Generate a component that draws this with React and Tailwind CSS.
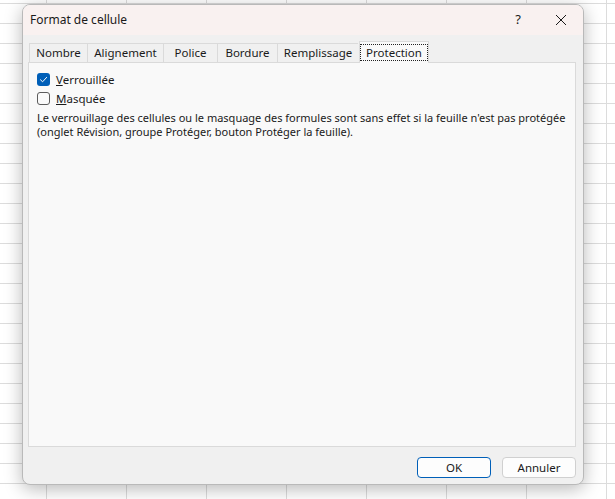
import React from 'react';

// Tabs of the "Format de cellule" dialog, Protection is the active one
const tabs = [
  { name: 'Nombre', w: 'w-[58px]' },
  { name: 'Alignement', w: 'w-[76px]' },
  { name: 'Police', w: 'w-[54px]' },
  { name: 'Bordure', w: 'w-[60px]' },
  { name: 'Remplissage', w: 'w-[81px]' },
];

function Checkbox({ checked }) {
  return checked ? (
    <span className="w-[13px] h-[13px] rounded-[3px] bg-[#005fb8] flex items-center justify-center">
      <svg width="9" height="9" viewBox="0 0 9 9" fill="none">
        <path d="M1.5 4.8 L3.6 6.8 L7.6 2.4" stroke="white" strokeWidth="1" strokeLinecap="round" strokeLinejoin="round" />
      </svg>
    </span>
  ) : (
    <span className="w-[13px] h-[13px] rounded-[3px] border border-[#5c5c5c] bg-[#fafafa]" />
  );
}

export default function App() {
  return (
    <div
      className="w-full h-[499px] overflow-hidden bg-white pt-[4px] pl-[22px] bg-[linear-gradient(to_right,#dcdcdc_1px,transparent_1px),linear-gradient(to_bottom,#dcdcdc_1px,transparent_1px)] bg-[size:80px_20px] bg-[position:46px_3px]"
      style={{ fontFamily: '"Noto Sans", "Segoe UI", sans-serif' }}
    >
      <div className="w-[562px] h-[481px] rounded-[8px] border border-[#b9b9b9] bg-[#f0f0f0] shadow-[0_4px_18px_rgba(0,0,0,0.28)] flex flex-col overflow-hidden text-[#1a1a1a]">
        {/* title bar */}
        <div className="h-[30px] bg-[#f9f1f0] flex items-center pl-[7px] shrink-0">
          <span className="text-[12px] flex-1">Format de cellule</span>
          <span className="text-[13px] w-[20px] text-center mr-[27px]">?</span>
          <svg width="12" height="12" viewBox="0 0 12 12" className="mr-[16px]">
            <path d="M1 1 L11 11 M11 1 L1 11" stroke="#1a1a1a" strokeWidth="1" />
          </svg>
        </div>

        {/* tabs */}
        <div className="flex items-end pl-[6px] h-[27px] text-[11.5px] shrink-0">
          {tabs.map((t) => (
            <div
              key={t.name}
              className={`${t.w} h-[19px] flex items-center justify-center border-t border-l border-[#dadada] bg-[#f0f0f0]`}
            >
              {t.name}
            </div>
          ))}
          <div className="w-[70px] h-[22px] flex items-center justify-center border-t border-l border-r border-[#dadada] bg-[#f9f9f9] -mb-px relative z-10 ml-[1px]">
            <span className="border border-dotted border-[#222] px-[5px] leading-[15px]">Protection</span>
          </div>
        </div>

        {/* panel */}
        <div className="ml-[5px] mr-[7px] h-[385px] border border-[#dadada] bg-[#f9f9f9] px-[8px] pt-[10px] text-[11.5px] shrink-0">
          <div className="flex items-center gap-[6px] h-[13px]">
            <Checkbox checked />
            <span><span className="underline">V</span>errouillée</span>
          </div>
          <div className="flex items-center gap-[6px] h-[13px] mt-[6px]">
            <Checkbox />
            <span><span className="underline">M</span>asquée</span>
          </div>
          <p className="mt-[6px] leading-[14px] text-[11px] whitespace-nowrap">
            Le verrouillage des cellules ou le masquage des formules sont sans effet si la feuille n'est pas protégée
            <br />
            (onglet Révision, groupe Protéger, bouton Protéger la feuille).
          </p>
        </div>

        {/* buttons */}
        <div className="flex justify-end gap-[11px] pr-[7px] mt-[10px] text-[11.5px]">
          <button className="w-[74px] h-[21px] rounded-[4px] border border-[#005fb8] bg-[#fdfdfd]">OK</button>
          <button className="w-[74px] h-[21px] rounded-[4px] border border-[#d0d0d0] bg-[#fdfdfd]">Annuler</button>
        </div>
      </div>
    </div>
  );
}
